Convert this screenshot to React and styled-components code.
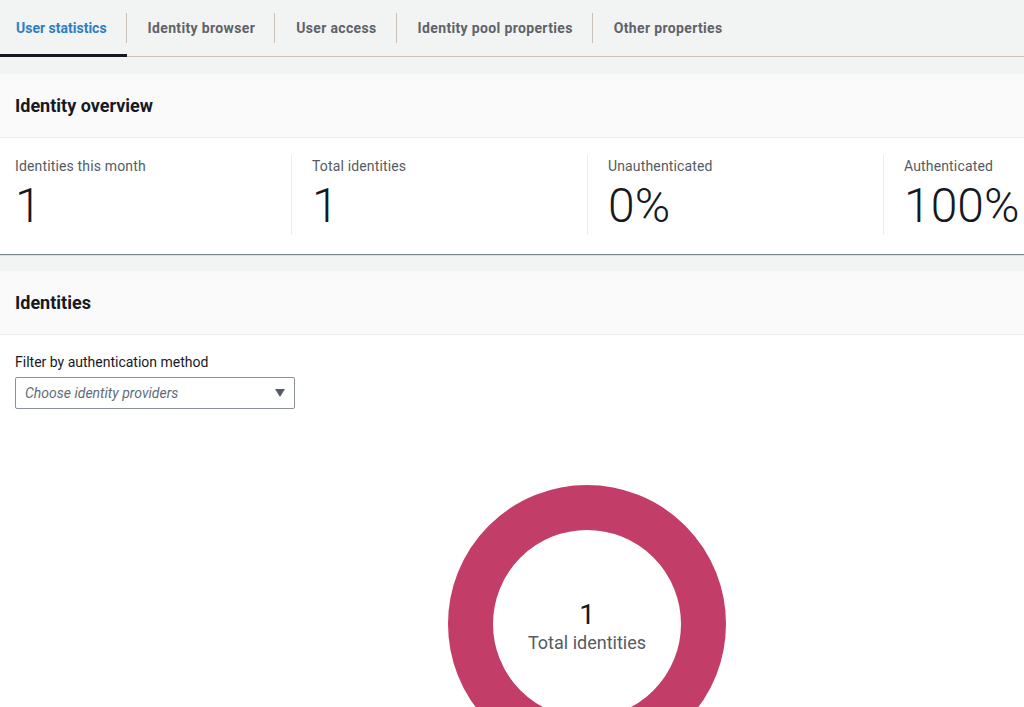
import React from 'react'
import styled, { createGlobalStyle } from 'styled-components'

const Global = createGlobalStyle`
  html, body {
    margin: 0;
    padding: 0;
    overflow: hidden;
    background: #f2f3f3;
    font-family: Roboto, "Liberation Sans", Arial, sans-serif;
    color: #16191f;
  }
`

const Page = styled.div`
  width: 1174px;
  display: flex;
  flex-direction: column;
  gap: 17px;
`

const TabBar = styled.div`
  display: flex;
  height: 56px;
  border-bottom: 1px solid #cbc3bb;
  background: #f2f3f3;
`

const Tab = styled.div`
  position: relative;
  display: flex;
  align-items: center;
  padding: 0 20px 0 21px;
  font-size: 14px;
  font-weight: 700;
  letter-spacing: 0.35px;
  color: ${p => (p.active ? '#2d7fc1' : '#5f6369')};
  &:first-child {
    padding-left: 16px;
    letter-spacing: 0;
  }
  &:not(:last-child)::after {
    content: '';
    position: absolute;
    right: 0;
    top: 13px;
    bottom: 13px;
    width: 1px;
    background: #c9c2bb;
  }
  ${p =>
    p.active &&
    `&::before {
      content: '';
      position: absolute;
      left: 0;
      right: 0;
      bottom: -1px;
      height: 3px;
      background: #16191f;
    }`}
`

const Card = styled.section`
  background: #ffffff;
  box-shadow: 0 1px 1px 0 rgba(0, 28, 36, 0.5);
`

const CardHeader = styled.div`
  height: 63px;
  display: flex;
  align-items: center;
  padding: 0 15px;
  background: #fafafa;
  border-bottom: 1px solid #eaeded;
  font-size: 18px;
  font-weight: 700;
  color: #16191f;
`

const StatsRow = styled.div`
  display: grid;
  grid-template-columns: 276px 296px 296px 296px;
  padding: 17px 0 19px 15px;
`

const Stat = styled.div`
  display: flex;
  flex-direction: column;
  padding-left: ${p => (p.first ? '0' : '20px')};
  border-left: ${p => (p.first ? 'none' : '1px solid #eaeded')};
  height: 80px;
`

const StatLabel = styled.div`
  font-size: 14px;
  line-height: 22px;
  color: #545b64;
  letter-spacing: 0.15px;
`

const StatValue = styled.div`
  font-size: 48px;
  font-weight: 300;
  line-height: 56px;
  color: #16191f;
  margin-top: 1px;
`

const CardBody = styled.div`
  padding: 17px 15px 0;
  height: 400px;
`

const FieldLabel = styled.div`
  font-size: 14px;
  line-height: 20px;
  color: #16191f;
  margin-bottom: 5px;
`

const Select = styled.div`
  width: 280px;
  height: 32px;
  box-sizing: border-box;
  border: 1px solid #8a9199;
  border-radius: 2px;
  display: flex;
  align-items: center;
  justify-content: space-between;
  padding: 0 9px 0 9px;
  font-size: 14px;
  font-style: italic;
  color: #5f6b7a;
`

const Caret = styled.span`
  width: 0;
  height: 0;
  border-left: 5px solid transparent;
  border-right: 5px solid transparent;
  border-top: 8px solid #545b64;
`

const ChartArea = styled.div`
  display: flex;
  justify-content: center;
  padding-top: 75px;
`

const Donut = styled.div`
  position: relative;
  width: 280px;
  height: 280px;
`

const DonutCenter = styled.div`
  position: absolute;
  inset: 0;
  display: flex;
  flex-direction: column;
  align-items: center;
  justify-content: center;
  padding-top: 5px;
`

const DonutValue = styled.div`
  font-size: 28px;
  line-height: 32px;
  color: #16191f;
`

const DonutLabel = styled.div`
  font-size: 18px;
  line-height: 24px;
  color: #545b64;
`

const tabs = ['User statistics', 'Identity browser', 'User access', 'Identity pool properties', 'Other properties']
const stats = [
  ['Identities this month', '1'],
  ['Total identities', '1'],
  ['Unauthenticated', '0%'],
  ['Authenticated', '100%'],
]

const App = () => {
  return (
    <Page>
      <Global />
      <TabBar>
        {tabs.map((t, i) => (
          <Tab key={t} active={i === 0}>{t}</Tab>
        ))}
      </TabBar>
      <Card>
        <CardHeader>Identity overview</CardHeader>
        <StatsRow>
          {stats.map(([label, value], i) => (
            <Stat key={label} first={i === 0}>
              <StatLabel>{label}</StatLabel>
              <StatValue>{value}</StatValue>
            </Stat>
          ))}
        </StatsRow>
      </Card>
      <Card>
        <CardHeader>Identities</CardHeader>
        <CardBody>
          <FieldLabel>Filter by authentication method</FieldLabel>
          <Select>
            Choose identity providers
            <Caret />
          </Select>
          <ChartArea>
            <Donut>
              <svg width="280" height="280" viewBox="0 0 280 280">
                <circle cx="140" cy="140" r="116.5" fill="none" stroke="#c33d69" strokeWidth="45" />
              </svg>
              <DonutCenter>
                <DonutValue>1</DonutValue>
                <DonutLabel>Total identities</DonutLabel>
              </DonutCenter>
            </Donut>
          </ChartArea>
        </CardBody>
      </Card>
    </Page>
  )
}

export default App
